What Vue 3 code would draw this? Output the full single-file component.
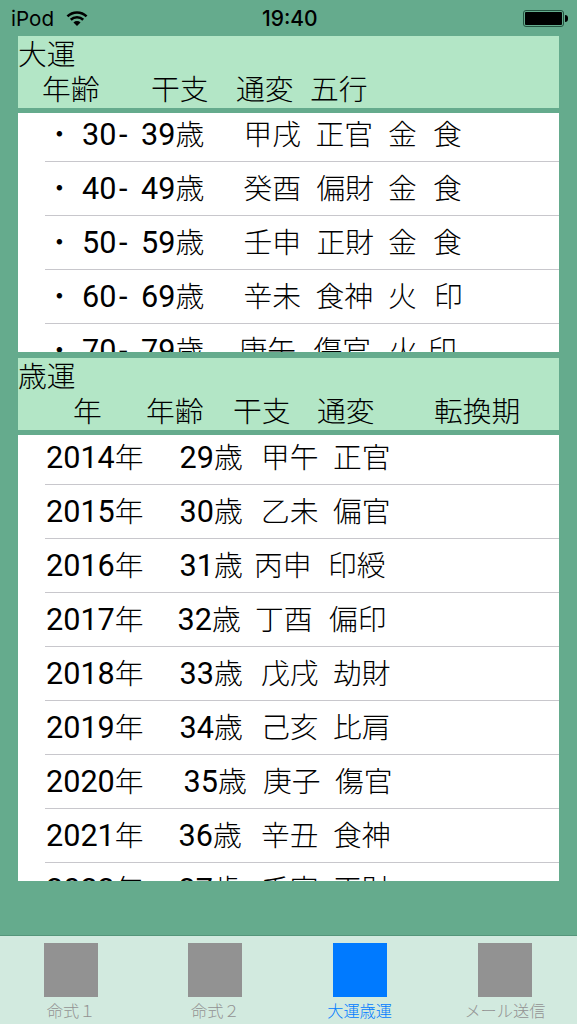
<script setup>
const luck = [
  [['・', 45], ['30', 82], ['-', 119], ['39歳', 141], ['甲戌', 243.5], ['正官', 315.5], ['金', 388], ['食', 433]],
  [['・', 45], ['40', 82], ['-', 119], ['49歳', 141], ['癸酉', 243.5], ['偏財', 316.5], ['金', 388], ['食', 433]],
  [['・', 45], ['50', 82], ['-', 119], ['59歳', 141], ['壬申', 243.5], ['正財', 316.5], ['金', 388], ['食', 433]],
  [['・', 45], ['60', 82], ['-', 119], ['69歳', 141], ['辛未', 243.5], ['食神', 315.5], ['火', 388], ['印', 434]],
  [['・', 45], ['70', 82], ['-', 119], ['79歳', 141], ['庚午', 238.5], ['傷官', 313.5], ['火', 389], ['印', 428]]
]
const years = [
  [['2014年', 46], ['29歳', 179.5], ['甲午', 261], ['正官', 333]],
  [['2015年', 46], ['30歳', 179.5], ['乙未', 261], ['偏官', 333]],
  [['2016年', 46], ['31歳', 179.5], ['丙申', 254], ['印綬', 328]],
  [['2017年', 46], ['32歳', 177.5], ['丁酉', 255], ['偏印', 329]],
  [['2018年', 46], ['33歳', 179.5], ['戊戌', 261], ['劫財', 333]],
  [['2019年', 46], ['34歳', 179.5], ['己亥', 261], ['比肩', 333]],
  [['2020年', 46], ['35歳', 183.5], ['庚子', 263], ['傷官', 335]],
  [['2021年', 46], ['36歳', 178.5], ['辛丑', 261], ['食神', 333]],
  [['2022年', 46], ['37歳', 178.5], ['壬寅', 261], ['正財', 333]]
]
const luckHead = [['年齢', 42], ['干支', 151], ['通変', 236], ['五行', 310]]
const yearHead = [['年', 73], ['年齢', 146], ['干支', 233], ['通変', 317], ['転換期', 434]]
const tabs = [
  { label: '命式１' },
  { label: '命式２' },
  { label: '大運歳運', active: true },
  { label: 'メール送信' }
]
function cells(row, origin) {
  return row.map(([text, x], i) => ({
    parts: text.split(/([0-9-]+)/).filter(Boolean).map((t) => ({ t, num: /^[0-9-]+$/.test(t) })),
    style: {
      marginLeft: i === 0 ? `${x - origin}px` : '0',
      width: i < row.length - 1 ? `${row[i + 1][1] - x}px` : 'auto'
    }
  }))
}
</script>

<template>
  <div class="page">
    <header class="status">
      <span class="carrier">iPod</span>
      <svg class="wifi" viewBox="0 0 22 16" width="22" height="16">
        <path d="M11 16 L7.46 12.46 A5 5 0 0 1 14.54 12.46 Z" fill="#000" />
        <path d="M4.78 9.78 A8.8 8.8 0 0 1 17.22 9.78" fill="none" stroke="#000" stroke-width="2.6" />
        <path d="M1.45 6.45 A13.5 13.5 0 0 1 20.55 6.45" fill="none" stroke="#000" stroke-width="2.6" />
      </svg>
      <span class="time">19:40</span>
      <span class="battery"><i class="cap"></i></span>
    </header>

    <section class="block">
      <div class="head">
        <div class="title">大運</div>
        <div class="cols">
          <span v-for="(c, i) in cells(luckHead, 18)" :key="i" :style="c.style"><template v-for="(p, j) in c.parts" :key="j">{{ p.t }}</template></span>
        </div>
      </div>
      <div class="list luck">
        <div class="rows">
          <div v-for="(row, r) in luck" :key="r" class="row">
            <span v-for="(c, i) in cells(row, 45)" :key="i" class="cell" :style="c.style"><span v-for="(p, j) in c.parts" :key="j" :class="{ num: p.num }">{{ p.t }}</span></span>
          </div>
        </div>
      </div>
    </section>

    <section class="block second">
      <div class="head">
        <div class="title">歳運</div>
        <div class="cols">
          <span v-for="(c, i) in cells(yearHead, 18)" :key="i" :style="c.style"><template v-for="(p, j) in c.parts" :key="j">{{ p.t }}</template></span>
        </div>
      </div>
      <div class="list year">
        <div class="rows">
          <div v-for="(row, r) in years" :key="r" class="row">
            <span v-for="(c, i) in cells(row, 45)" :key="i" class="cell" :style="c.style"><span v-for="(p, j) in c.parts" :key="j" :class="{ num: p.num }">{{ p.t }}</span></span>
          </div>
        </div>
      </div>
    </section>

    <nav class="tabbar">
      <div v-for="t in tabs" :key="t.label" class="tab" :class="{ active: t.active }">
        <div class="tab-icon"></div>
        <div class="tab-label">{{ t.label }}</div>
      </div>
    </nav>
  </div>
</template>

<style scoped>
.page {
  width: 577px;
  height: 1024px;
  background: #65ab8d;
  display: flex;
  flex-direction: column;
  overflow: hidden;
  font-family: "Liberation Sans", "Noto Sans CJK JP", sans-serif;
  color: #000;
}
.status {
  height: 36px;
  flex: none;
  position: relative;
  display: flex;
  align-items: center;
  padding: 0 13px 0 11px;
  font-family: Inter, "Liberation Sans", sans-serif;
  font-size: 20.6px;
  color: #000;
}
.carrier { margin-right: 12px; }
.wifi { flex: none; }
.time {
  position: absolute;
  left: 262px;
  font-size: 21px;
  font-weight: 500;
}
.battery {
  margin-left: auto;
  width: 41px;
  height: 17px;
  box-sizing: border-box;
  padding: 1px;
  border: 1px solid #23533f;
  border-radius: 3px;
  background: #000;
  background-clip: content-box;
  position: relative;
}
.cap {
  position: absolute;
  right: -5px;
  top: 4px;
  width: 3px;
  height: 7px;
  background: #000;
  border-radius: 0 3px 3px 0;
}
.block {
  margin: 0 18px;
  flex: none;
}
.second { margin-top: 6px; }
.head {
  height: 72px;
  background: #b3e6c6;
  font-size: 28.8px;
  line-height: 36px;
  font-weight: 300;
}
.title { height: 36px; padding-top: 1px; box-sizing: border-box; }
.cols {
  display: flex;
  height: 36px;
}
.cols span, .cell {
  flex: none;
  white-space: nowrap;
}
.list {
  margin-top: 5px;
  background: #fff;
  overflow: hidden;
}
.luck { height: 239px; }
.year { height: 446px; }
.rows { margin-top: -5px; }
.year .rows { margin-top: -4px; }
.row {
  height: 54px;
  margin-left: 27px;
  box-sizing: border-box;
  border-bottom: 1px solid #c8c7cc;
  display: flex;
  align-items: center;
  font-size: 28.8px;
  line-height: 54px;
  font-weight: 300;
  padding-top: 1px;
}
.num {
  font-family: Roboto, "Liberation Sans", sans-serif;
  font-size: 30.6px;
  font-weight: 400;
}
.tabbar {
  margin-top: auto;
  height: 89px;
  flex: none;
  box-sizing: border-box;
  border-top: 1px solid #55967b;
  background: #d2eadf;
  display: grid;
  grid-template-columns: repeat(4, 1fr);
}
.tab {
  display: flex;
  flex-direction: column;
  align-items: center;
  padding: 7px 2px 0 0;
  color: #929292;
}
.tab:last-child { padding-right: 0; }
.tab-icon {
  width: 54px;
  height: 54px;
  background: #929292;
}
.tab-label {
  font-size: 16.2px;
  line-height: 20px;
  margin-top: 4px;
  white-space: nowrap;
  font-weight: 300;
}
.active { color: #007aff; }
.active .tab-icon { background: #007aff; }
</style>
